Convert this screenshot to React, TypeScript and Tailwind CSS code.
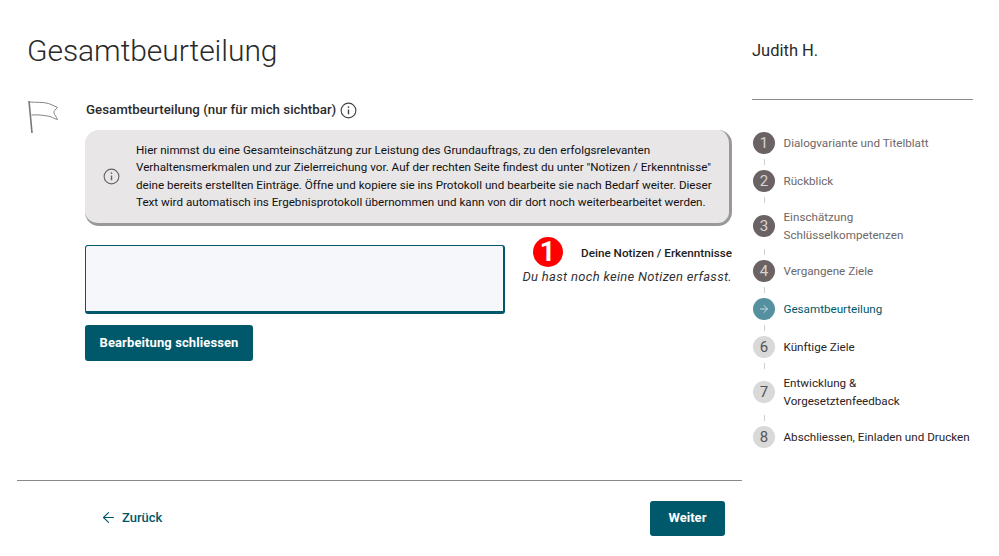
import { ArrowLeft, ArrowRight } from 'lucide-react';

type Step = { n: number; label: string[]; state: 'done' | 'active' | 'todo' };

const steps: Step[] = [
  { n: 1, label: ['Dialogvariante und Titelblatt'], state: 'done' },
  { n: 2, label: ['Rückblick'], state: 'done' },
  { n: 3, label: ['Einschätzung', 'Schlüsselkompetenzen'], state: 'done' },
  { n: 4, label: ['Vergangene Ziele'], state: 'done' },
  { n: 5, label: ['Gesamtbeurteilung'], state: 'active' },
  { n: 6, label: ['Künftige Ziele'], state: 'todo' },
  { n: 7, label: ['Entwicklung &', 'Vorgesetztenfeedback'], state: 'todo' },
  { n: 8, label: ['Abschliessen, Einladen und Drucken'], state: 'todo' },
];

function InfoIcon({ className }: { className: string }) {
  return (
    <svg viewBox="0 0 18 18" fill="none" stroke="currentColor" className={className}>
      <circle cx="9" cy="9" r="7.8" strokeWidth="1.2" />
      <path d="M9 8v5" strokeWidth="1.5" />
      <circle cx="9" cy="5.4" r="0.9" fill="currentColor" stroke="none" />
    </svg>
  );
}

function Flag() {
  return (
    <svg viewBox="0 0 34 34" fill="none" stroke="#777" className="w-[34px] h-[34px]">
      <path d="M2 1l3 32" strokeWidth="1.6" />
      <path d="M2.500 2c7 .5 14 0 19 1.500 3 1 6 2.500 9 4-2 2-4 3.500-3.500 5.500.5 2 2.500 4 3.500 6.500-4-1-6-3-10-3.500-5-.7-10-1.500-16-1" strokeWidth="0.9" />
    </svg>
  );
}

function StepRow({ step, last }: { step: Step; last: boolean }) {
  const circle =
    step.state === 'done'
      ? 'bg-[#6b6363] text-[#d8d4d4]'
      : step.state === 'active'
        ? 'bg-[#54909f] text-[#d5e6ea]'
        : 'bg-[#d9d9d9] text-[#555]';
  const text =
    step.state === 'done' ? 'text-[#6e6868]' : step.state === 'active' ? 'text-[#00586b]' : 'text-[#2b2326]';
  return (
    <div className="flex flex-col">
      <div className="flex items-center gap-[8.500px]">
        <div className={`w-[22px] h-[22px] rounded-full flex items-center justify-center text-[15px] shrink-0 ${circle}`}>
          {step.state === 'active' ? <ArrowRight size={12} strokeWidth={1.75} /> : step.n}
        </div>
        <div className={`text-[11.650px] leading-[18px] whitespace-nowrap ${text}`}>
          {step.label.map((l) => (
            <div key={l}>{l}</div>
          ))}
        </div>
      </div>
      {!last && (
        <div className="w-[22px] flex justify-center py-[5px]">
          <div className="w-px h-[6px] bg-[#cfcfcf]" />
        </div>
      )}
    </div>
  );
}

export default function App() {
  return (
    <div className="w-[999px] h-[556px] bg-white flex overflow-hidden font-['Roboto',sans-serif] text-[#212121]">
      <main className="w-[742px] pl-[17px] shrink-0 flex flex-col">
        <h1 className="pl-[10px] pt-[33px] text-[30px] leading-[36px] font-light text-[#2a2a2a] tracking-[-0.05px]">
          Gesamtbeurteilung
        </h1>
        <div className="flex pt-[31px] pl-[10px] h-[411px]">
          <div className="w-[58px] shrink-0">
            <Flag />
          </div>
          <div className="w-[647px] flex flex-col">
            <div className="flex items-center gap-[4px] h-[20px] pl-px text-[13.300px] font-medium text-[#2b2b2b]">
              Gesamtbeurteilung (nur für mich sichtbar)
              <InfoIcon className="w-[17px] h-[17px] text-[#444]" />
            </div>
            <div className="mt-[10px] flex items-center h-[96px] bg-[#e8e6e7] rounded-[14px] border-r-[3px] border-b-[3px] border-[#999] pl-[18px]">
              <InfoIcon className="w-[17px] h-[17px] text-[#666] shrink-0" />
              <p className="pl-[16px] text-[11.650px] leading-[17.300px] text-[#111] whitespace-nowrap">
                Hier nimmst du eine Gesamteinschätzung zur Leistung des Grundauftrags, zu den erfolgsrelevanten
                <br />
                Verhaltensmerkmalen und zur Zielerreichung vor. Auf der rechten Seite findest du unter "Notizen / Erkenntnisse"
                <br />
                deine bereits erstellten Einträge. Öffne und kopiere sie ins Protokoll und bearbeite sie nach Bedarf weiter. Dieser
                <br />
                Text wird automatisch ins Ergebnisprotokoll übernommen und kann von dir dort noch weiterbearbeitet werden.
              </p>
            </div>
            <div className="mt-[19px] flex justify-between">
              <div className="w-[420px] h-[69px] bg-[#f6f7fb] rounded-[3px] border border-[#00586b] border-r-2 border-b-[3px]" />
              <div className="relative flex flex-col items-end">
                <div className="text-[11.700px] leading-[16px] font-medium text-[#222]">Deine Notizen / Erkenntnisse</div>
                <div className="mt-[7px] text-[13px] leading-[18px] italic tracking-[0.3px] text-[#333]">
                  Du hast noch keine Notizen erfasst.
                </div>
                <div className="absolute left-[10px] -top-[8px] w-[30px] h-[30px] rounded-full bg-[#ff0000] text-white flex items-center justify-center font-bold text-[27px]">
                  1
                </div>
              </div>
            </div>
            <button className="mt-[11px] w-[168px] h-[36px] rounded-[3px] bg-[#00586b] text-white text-[13px] font-bold tracking-[0.1px]">
              Bearbeitung schliessen
            </button>
          </div>
        </div>
        <div className="border-t border-[#8a8a8a] flex items-center justify-between h-[75px] pl-[83px] pr-[17px]">
          <button className="flex items-center gap-[5px] text-[#00586b] text-[13px] font-medium -mt-px">
            <ArrowLeft size={17} strokeWidth={1.5} />
            Zurück
          </button>
          <button className="w-[75px] h-[35px] rounded-[3px] bg-[#00586b] text-white text-[13px] font-bold">
            Weiter
          </button>
        </div>
      </main>
      <aside className="ml-[10px] w-[221px] shrink-0 flex flex-col">
        <div className="pt-[41px] h-[100px] border-b border-[#8a8a8a] text-[16.500px] leading-[20px] text-[#2a2a2a]">
          Judith H.
        </div>
        <div className="pt-[32px] pl-px flex flex-col">
          {steps.map((s, i) => (
            <StepRow key={s.n} step={s} last={i === steps.length - 1} />
          ))}
        </div>
      </aside>
    </div>
  );
}
